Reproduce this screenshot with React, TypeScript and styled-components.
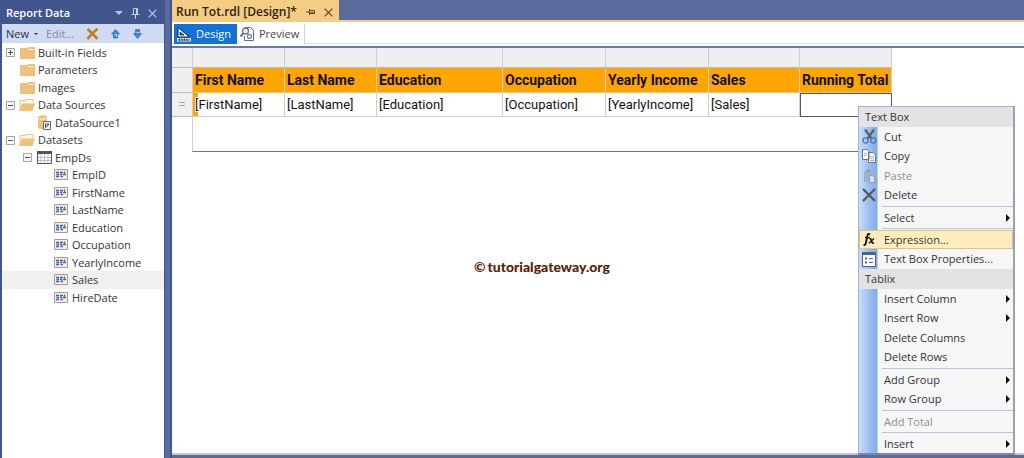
import React from "react";
import styled, { createGlobalStyle, css } from "styled-components";

const ui = `"Open Sans", "Noto Sans", sans-serif`;
const report = `Roboto, "Liberation Sans", sans-serif`;

const GlobalStyle = createGlobalStyle`
  * { box-sizing: border-box; }
  body { margin: 0; background: #5b6a9c; font: 11px/16px ${ui}; color: #333338; }
  button { font: inherit; color: inherit; border: 0; padding: 0; background: none; text-align: left; }
  ul { list-style: none; margin: 0; padding: 0; }
  svg { display: block; flex: none; }
`;

const Shell = styled.div`
  position: relative;
  display: flex;
  min-height: 100vh;
  overflow: hidden;
`;

/* Report Data pane */
const Pane = styled.aside`
  flex: none;
  display: flex;
  flex-direction: column;
  width: 165px;
  border-left: 2px solid #40568d;
  border-right: 1px solid #40568d;
  background: #fff;
`;
const PaneTitle = styled.header`
  display: flex;
  align-items: center;
  gap: 8px;
  height: 24px;
  padding: 2px 7px 0 4px;
  background: #40568d;
  color: #fff;
`;
const PaneName = styled.h2`
  flex: 1;
  margin: 0;
  font-size: 11px;
  font-weight: 600;
  white-space: nowrap;
`;
const PaneTools = styled.div`
  display: flex;
  align-items: center;
  height: 19px;
  padding: 0 4px;
  background: #cfdbf2;
`;
const ToolButton = styled.button<{ $gap?: number; $dim?: boolean }>`
  display: flex;
  align-items: center;
  gap: 5px;
  margin-right: ${(p) => p.$gap ?? 0}px;
  color: ${(p) => (p.$dim ? "#858a98" : "#2d3038")};
`;
const Tree = styled.ul`
  flex: 1;
  padding-top: 1px;
`;
const TreeRow = styled.li<{ $level: number; $selected?: boolean }>`
  display: flex;
  align-items: center;
  height: 17px;
  padding-left: ${(p) => 4 + p.$level * 17}px;
  background: ${(p) => (p.$selected ? "#f0f0f0" : "transparent")};
  white-space: nowrap;
  &:nth-child(even) { height: 18px; }
`;
const Toggle = styled.button`
  width: 9px;
  height: 9px;
`;
const ToggleSpace = styled.span`
  width: 9px;
`;
const NodeIcon = styled.span`
  display: flex;
  justify-content: flex-end;
  width: 20px;
  margin-right: 3px;
`;

/* Document area */
const Workspace = styled.main`
  flex: 1;
  min-width: 0;
  display: flex;
  flex-direction: column;
  margin-left: 5px;
  padding-bottom: 3px;
  border-left: 2px solid #40568d;
`;
const TabStrip = styled.div`
  display: flex;
  border-bottom: 2px solid #f5cc84;
`;
const DocTab = styled.div`
  display: flex;
  align-items: center;
  gap: 9px;
  height: 20px;
  padding: 4px 6px 0 4px;
  background: #f5cc84;
  color: #2c2416;
  font-size: 12px;
  font-weight: 600;
  white-space: nowrap;
`;
const ViewBar = styled.div`
  display: flex;
  height: 24px;
  padding: 2px 0 0 2px;
  background: linear-gradient(#fff 21px, #dfe4f0 21px, #dfe4f0 22px, #fff 22px);
`;
const ViewButton = styled.button<{ $active?: boolean }>`
  display: flex;
  align-items: center;
  gap: 5px;
  height: 20px;
  padding: 0 5px 0 3px;
  border-right: 1px solid ${(p) => (p.$active ? "#1272d8" : "#cdd3e2")};
  background: ${(p) => (p.$active ? "#1272d8" : "#fff")};
  color: ${(p) => (p.$active ? "#fff" : "#444")};
`;
const Surface = styled.section`
  flex: 1;
  border-top: 2px solid #6a78a4;
  border-bottom: 2px solid #c4c6cc;
  background: #fff;
`;
const ReportTable = styled.table`
  table-layout: fixed;
  width: 720px;
  border-collapse: separate;
  border-spacing: 0;
  font-family: ${report};
  font-size: 13px;
  color: #111;
`;
const Handle = styled.td<{ $w?: number }>`
  width: ${(p) => p.$w ?? 92}px;
  height: 20px;
  padding: 0;
  border-right: 1px solid #cfcfcf;
  border-bottom: 1px solid #bdbdbd;
  background: #efefef;
  color: #999;
  text-align: center;
`;
const cell = css`
  padding: 0 0 0 2px;
  border-right: 1px solid #cfcfcf;
  text-align: left;
  white-space: nowrap;
`;
const HeadCell = styled.th`
  ${cell}
  height: 25px;
  background: #ffa500;
  border-bottom: 1px solid #d8c49c;
  font-size: 14px;
  font-weight: 700;
`;
const DataCell = styled.td<{ $mark?: boolean; $selected?: boolean }>`
  ${cell}
  height: 24px;
  border-bottom: 1px solid #cfcfcf;
  background: ${(p) => (p.$mark ? "linear-gradient(90deg, #ffa500 5px, transparent 5px)" : "#fff")};
  ${(p) => p.$selected && "outline: 1px solid #55525c; outline-offset: -1px;"}
`;
const ValueText = styled.span<{ $paper?: boolean }>`
  background: ${(p) => (p.$paper ? "#fff" : "none")};
`;
const ReportBody = styled.div`
  width: 700px;
  height: 35px;
  margin-left: 20px;
  border-left: 1px solid #cfcfcf;
  border-bottom: 1px solid #757575;
`;
const Watermark = styled.p`
  display: flex;
  gap: 2px;
  margin: 106px 0 0 302px;
  font: 900 14px/18px Lato, sans-serif;
  color: #5a2208;
`;

/* Context menu */
const Menu = styled.div`
  position: absolute;
  left: 858px;
  top: 106px;
  width: 157px;
  border: 1px solid #a3b3d3;
  border-right: 2px solid #9a9fb8;
  border-bottom: 2px solid #7f87a6;
  background: linear-gradient(90deg, #c9ddf9, #9cbff0 10px, #82abe6 18px, #f6f6f6 19px);
`;
const MenuHeading = styled.h3`
  height: 20px;
  margin: 0;
  padding-left: 6px;
  background: #e3e3e3;
  font-size: 11px;
  font-weight: 400;
  line-height: 20px;
`;
const MenuGroup = styled.ul`
  & + & { position: relative; padding-top: 3px; }
  & + &::before {
    content: "";
    position: absolute;
    left: 23px;
    right: 0;
    top: 1px;
    border-top: 1px solid #b4c6e6;
  }
`;
const MenuItem = styled.li<{ $hot?: boolean }>`
  height: 19px;
  border: 1px solid ${(p) => (p.$hot ? "#e0c184" : "transparent")};
  background: ${(p) => (p.$hot ? "#ffedbe" : "transparent")};
  &:nth-child(even) { height: 20px; }
`;
const MenuButton = styled.button`
  display: flex;
  align-items: center;
  width: 100%;
  height: 100%;
  padding-right: 2px;
  white-space: nowrap;
  &:disabled { color: #8f8f93; }
`;
const MenuIcon = styled.span`
  display: flex;
  justify-content: center;
  width: 18px;
  margin-right: 6px;
`;
const MenuLabel = styled.span`
  flex: 1;
`;

/* Icons */
const Caret = ({ w = 8, color = "#b9c3dc" }) => (
  <svg width={w} height={w / 2} viewBox="0 0 8 4"><path d="M0 0h8L4 4z" fill={color} /></svg>
);
const Pin = () => (
  <svg width="9" height="12" viewBox="0 0 9 12" fill="none" stroke="#c3cce2"><path d="M2.500 7V1.500h4V7M5.500 1.500V7M.5 7.500h8M4.500 7.500V12" /></svg>
);
const SidePin = () => (
  <svg width="9" height="8" viewBox="0 0 9 8" fill="none" stroke="#5c4720"><path d="M0 4h3M3.500 1v6M3.500 2.500h5v3h-5M3.500 4.800h5" /></svg>
);
const Close = ({ size = 9, color = "#c3cce2", width = 1.3 }) => (
  <svg width={size} height={size} viewBox="0 0 10 10"><path d="M.7.7l8.600 8.600M9.300.7L.7 9.300" stroke={color} strokeWidth={width} /></svg>
);
const RedoCross = () => (
  <svg width="13" height="12" viewBox="0 0 13 12"><path d="M1.500 1c3 2.500 6 6 10 9.800M11.500.8C8 3.500 4.500 7 1.500 11" stroke="#c07d18" strokeWidth="2.600" fill="none" /></svg>
);
const Arrow = ({ down = false }) => (
  <svg width="9" height="10" viewBox="0 0 9 10"><path d={down ? "M2.500.500h4v4h2L4.500 9.500.5 4.500h2z" : "M4.500.5l4 4.500h-2v4h-4V5h-2z"} fill="#3f86dc" stroke="#2b66b4" strokeWidth=".7" /><path d={down ? "M3.500 3.500h3" : "M3.500 5.500h2V8"} stroke="#b9d8fb" fill="none" /></svg>
);
const Box = ({ plus = false }) => (
  <svg width="9" height="9" viewBox="0 0 9 9"><path d="M.5.5h8v8h-8z" fill="#f7f7f7" stroke="#a5a5a5" /><path d={plus ? "M2 4.500h5M4.500 2v5" : "M2 4.500h5"} stroke="#44567f" /></svg>
);
const Folder = () => (
  <svg width="15" height="12" viewBox="0 0 15 12"><path d="M0 1h7l1.500-1H15v12H0z" fill="#eec07b" /><path d="M8 2.500h6" stroke="#fff3dc" /></svg>
);
const OpenFolder = () => (
  <svg width="16" height="12" viewBox="0 0 16 12"><path d="M1 11V1.500h5l1.500-1H14V4" fill="#fff8ec" stroke="#eec07b" /><path d="M3 4.500h13L13.500 12H0z" fill="#eec07b" /></svg>
);
const DataSourceIcon = () => (
  <svg width="15" height="15" viewBox="0 0 15 15"><path d="M1 2c0-2.300 9-2.300 9 0v10.500c0 2-9 2-9 0z" fill="#eec07b" /><path d="M1 3c1.500 1.500 7.500 1.500 9 0" stroke="#fff3dc" fill="none" /><path d="M6.500 6.500h7v8h-7z" fill="#f5f5f5" stroke="#666" /><path d="M8.500 12.500V9h3.500M12 9l-3 3.500" stroke="#33456e" fill="none" /></svg>
);
const TableIcon = () => (
  <svg width="15" height="13" viewBox="0 0 15 13"><path d="M.5.5h14v12H.5z" fill="#fff" stroke="#555" /><path d="M0 0h15v3H0z" fill="#555" /><path d="M1 6.500h13M1 9.500h13M4 3v9M7.500 3v9M11 3v9" stroke="#a9b0bd" strokeWidth=".8" /></svg>
);
const FieldIcon = () => (
  <svg width="15" height="12" viewBox="0 0 15 12"><path d="M.5.5h13v10H.5z" fill="#f1eeea" stroke="#ad9a86" /><path d="M2 3.500h3M6 3.500h3M10.500 2.500v2M2.500 5.500h2.500M6 5.500h2M9 5.500h3M2 7.500h3M6.500 7.500h2.500" stroke="#3f62a4" strokeWidth="1.300" /></svg>
);
const DesignIcon = () => (
  <svg width="14" height="15" viewBox="0 0 14 15"><path d="M1 .500v9.500h11.500z" fill="#fff" stroke="#1b2840" /><path d="M3 5v3h4z" fill="#1272d8" stroke="#1b2840" strokeWidth=".8" /><path d="M0 11h14v3.500H0z" fill="#e8edf5" /><path d="M1 13h12M2.500 11.500v2M5 11.500v2M7.500 11.500v2M10 11.500v2" stroke="#26344f" strokeWidth=".9" /></svg>
);
const PreviewIcon = () => (
  <svg width="14" height="15" viewBox="0 0 14 15" fill="none" stroke="#686c76"><path d="M5.500 2.500V.5h5l3 3v10h-9V9" fill="#fff" /><circle cx="5.500" cy="4" r="3" fill="#e8eef8" strokeWidth="1.300" /><path d="M3.500 6.200L.5 9.500" strokeWidth="2" /><circle cx="9.500" cy="9.500" r="2" stroke="#7885a5" strokeWidth="1.300" /></svg>
);
const Scissors = () => (
  <svg width="15" height="15" viewBox="0 0 15 15" fill="none"><path d="M3 .5l6.500 9M12 .5L5.500 9.500" stroke="#5e5e64" strokeWidth="2.200" /><circle cx="3.500" cy="11.500" r="2.600" stroke="#4a77bd" strokeWidth="1.400" /><circle cx="11.200" cy="11.500" r="2.600" stroke="#4a77bd" strokeWidth="1.400" /></svg>
);
const CopyIcon = () => (
  <svg width="16" height="14" viewBox="0 0 16 14" fill="#fff" stroke="#65738e"><path d="M1.500.5H6l2 2v8H1.500zM7.500 3.500H12l2.500 2.500v7.500h-7z" /><path d="M3 4.500h3M3 6.500h3M9 7.500h4M9 9.500h4M9 11.500h4" stroke="#8fa3c6" strokeWidth=".8" /></svg>
);
const PasteIcon = () => (
  <svg width="14" height="14" viewBox="0 0 14 14"><path d="M2 2h9v11H2z" fill="#9fb0ce" /><path d="M4.500 0h4v3h-4z" fill="#8da0c2" /><path d="M7.500 6.500h3l2 2v5h-5z" fill="#d5dff0" stroke="#90a1c0" /></svg>
);
const PropertiesIcon = () => (
  <svg width="14" height="15" viewBox="0 0 14 15"><path d="M.5.5h13v14H.5z" fill="#fff" stroke="#4a6090" /><path d="M0 0h14v3H0z" fill="#4a6090" /><path d="M3 5.500h2v2H3zM3 9.500h2v2H3z" fill="#4a6090" /><path d="M7 6.500h4M7 10.500h4" stroke="#4a6090" /></svg>
);
const FxIcon = () => (
  <svg width="12" height="13" viewBox="0 0 12 13" fill="none" stroke="#151515"><path d="M7 1.500C5.500.2 4.600 1.300 4.300 3L3 9.500C2.700 11.500 1.800 12.500.5 11.500" strokeWidth="1.900" /><path d="M2 4.500h4.500" strokeWidth="1.400" /><path d="M6.300 5.500c1.500-.3 1.700.8 2.200 2.500.5 1.700 1 2.500 2.500 1.800" strokeWidth="1.700" /><path d="M11 5.500L6 10.300" strokeWidth="1.200" /></svg>
);
const Submenu = () => (
  <svg width="4" height="8" viewBox="0 0 4 8"><path d="M0 0l4 4-4 4z" fill="#111" /></svg>
);

type Node = { label: string; level: number; icon: React.ReactNode; open?: boolean; closed?: boolean; selected?: boolean };
const nodes: Node[] = [
  { label: "Built-in Fields", level: 0, icon: <Folder />, closed: true },
  { label: "Parameters", level: 0, icon: <Folder /> },
  { label: "Images", level: 0, icon: <Folder /> },
  { label: "Data Sources", level: 0, icon: <OpenFolder />, open: true },
  { label: "DataSource1", level: 1, icon: <DataSourceIcon /> },
  { label: "Datasets", level: 0, icon: <OpenFolder />, open: true },
  { label: "EmpDs", level: 1, icon: <TableIcon />, open: true },
  ...["EmpID", "FirstName", "LastName", "Education", "Occupation", "YearlyIncome", "Sales", "HireDate"].map((label) => ({
    label, level: 2, icon: <FieldIcon />, selected: label === "Sales",
  })),
];

const columns = [
  { title: "First Name", value: "[FirstName]", width: 92 },
  { title: "Last Name", value: "[LastName]", width: 92 },
  { title: "Education", value: "[Education]", width: 126 },
  { title: "Occupation", value: "[Occupation]", width: 103 },
  { title: "Yearly Income", value: "[YearlyIncome]", width: 103 },
  { title: "Sales", value: "[Sales]", width: 91 },
  { title: "Running Total", value: "", width: 92 },
];

type Item = { label: string; icon?: React.ReactNode; disabled?: boolean; more?: boolean; hot?: boolean };
const menu: { heading: string; groups: Item[][] }[] = [
  {
    heading: "Text Box",
    groups: [
      [
        { label: "Cut", icon: <Scissors /> },
        { label: "Copy", icon: <CopyIcon /> },
        { label: "Paste", icon: <PasteIcon />, disabled: true },
        { label: "Delete", icon: <Close size={14} color="#56565c" width={1.6} /> },
      ],
      [{ label: "Select", more: true }],
      [
        { label: "Expression...", icon: <FxIcon />, hot: true },
        { label: "Text Box Properties...", icon: <PropertiesIcon /> },
      ],
    ],
  },
  {
    heading: "Tablix",
    groups: [
      [
        { label: "Insert Column", more: true },
        { label: "Insert Row", more: true },
        { label: "Delete Columns" },
        { label: "Delete Rows" },
      ],
      [{ label: "Add Group", more: true }, { label: "Row Group", more: true }],
      [{ label: "Add Total", disabled: true }],
      [{ label: "Insert", more: true }],
    ],
  },
];

export default function App() {
  return (
    <>
      <GlobalStyle />
      <Shell>
        <Pane>
          <PaneTitle>
            <PaneName>Report Data</PaneName>
            <button aria-label="Pane options"><Caret /></button>
            <button aria-label="Pin pane"><Pin /></button>
            <button aria-label="Close pane"><Close /></button>
          </PaneTitle>
          <PaneTools>
            <ToolButton $gap={8}>New <Caret w={4} color="#2d3038" /></ToolButton>
            <ToolButton $gap={12} $dim>Edit...</ToolButton>
            <ToolButton $gap={12} aria-label="Delete"><RedoCross /></ToolButton>
            <ToolButton $gap={13} aria-label="Move up"><Arrow /></ToolButton>
            <ToolButton aria-label="Move down"><Arrow down /></ToolButton>
          </PaneTools>
          <Tree>
            {nodes.map((n) => (
              <TreeRow key={n.label} $level={n.level} $selected={n.selected}>
                {n.open || n.closed ? (
                  <Toggle aria-label={`Toggle ${n.label}`}><Box plus={n.closed} /></Toggle>
                ) : (
                  <ToggleSpace />
                )}
                <NodeIcon>{n.icon}</NodeIcon>
                {n.label}
              </TreeRow>
            ))}
          </Tree>
        </Pane>

        <Workspace>
          <TabStrip>
            <DocTab>
              Run Tot.rdl [Design]*
              <button aria-label="Pin tab"><SidePin /></button>
              <button aria-label="Close tab"><Close color="#5c4720" /></button>
            </DocTab>
          </TabStrip>
          <ViewBar>
            <ViewButton $active><DesignIcon />Design</ViewButton>
            <ViewButton><PreviewIcon />Preview</ViewButton>
          </ViewBar>
          <Surface>
            <ReportTable>
              <thead>
                <tr>
                  <Handle $w={21} />
                  {columns.map((c) => <Handle key={c.title} $w={c.width} />)}
                </tr>
                <tr>
                  <Handle />
                  {columns.map((c) => <HeadCell key={c.title} scope="col">{c.title}</HeadCell>)}
                </tr>
              </thead>
              <tbody>
                <tr>
                  <Handle>=</Handle>
                  {columns.map((c, i) => (
                    <DataCell key={c.title} $mark={i === 0} $selected={!c.value}>
                      <ValueText $paper={i === 0}>{c.value}</ValueText>
                    </DataCell>
                  ))}
                </tr>
              </tbody>
            </ReportTable>
            <ReportBody />
            <Watermark><span>©</span>tutorialgateway.org</Watermark>
          </Surface>
        </Workspace>

        <Menu>
          {menu.map((section) => (
            <React.Fragment key={section.heading}>
              <MenuHeading>{section.heading}</MenuHeading>
              {section.groups.map((group) => (
                <MenuGroup key={group[0].label}>
                  {group.map((item) => (
                    <MenuItem key={item.label} $hot={item.hot}>
                      <MenuButton disabled={item.disabled}>
                        <MenuIcon>{item.icon}</MenuIcon>
                        <MenuLabel>{item.label}</MenuLabel>
                        {item.more && <Submenu />}
                      </MenuButton>
                    </MenuItem>
                  ))}
                </MenuGroup>
              ))}
            </React.Fragment>
          ))}
        </Menu>
      </Shell>
    </>
  );
}
